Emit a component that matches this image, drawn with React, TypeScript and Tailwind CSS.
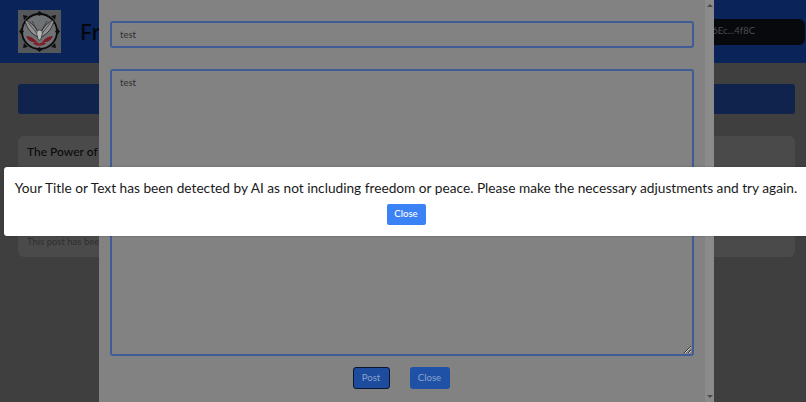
function Logo() {
  return (
    <svg viewBox="0 0 43 43" className="h-[43px] w-[43px] shrink-0">
      <rect width="43" height="43" fill="#55585a" />
      <circle cx="21.5" cy="21.5" r="17.5" fill="#6f7275" stroke="#0b0b0d" strokeWidth="1.8" />
      <g fill="#0e0e11">
        <path d="M21.5 1l3 2.5-3 2.5-3-2.5z" />
        <path d="M21.5 37l3 2.5-3 2.5-3-2.5z" />
        <path d="M1 21.5l2.5-3 2.5 3-2.5 3z" />
        <path d="M37 21.5l2.5-3 2.5 3-2.5 3z" />
        <path d="M5 5l5 1-4 4zM38 5l-5 1 4 4zM5 38l5-1-4-4zM38 38l-5-1 4-4z" />
      </g>
      <path d="M20 27C13 24 8 17 7 10c6 2 12 8 14 15z" fill="#8f9192" stroke="#1a1a1c" strokeWidth="0.8" />
      <path d="M23 27c7-3 12-10 13-17-6 2-12 8-14 15z" fill="#8f9192" stroke="#1a1a1c" strokeWidth="0.8" />
      <path d="M10.5 13l9 11M14 11l6 11M32.5 13l-9 11M29 11l-6 11" stroke="#2a2a2c" strokeWidth="0.7" fill="none" />
      <path d="M21.5 20c2.5 0 3.5 2.5 2.5 5l-1.5 5h-2L19 25c-1-2.5 0-5 2.5-5z" fill="#b5b6b6" stroke="#1a1a1c" strokeWidth="0.6" />
      <path d="M8 26c4 0 8 2 11 6-5 1-9-1-11-6zM35 26c-4 0-8 2-11 6 5 1 9-1 11-6z" fill="#7a1a24" />
      <path d="M15 33c2.5-1 5-1 6.5 1 1.5-2 4-2 6.5-1-2.5 3.5-10.5 3.5-13 0z" fill="#7f1c28" />
    </svg>
  )
}

function Scrollbar() {
  return (
    <div className="flex w-[9px] shrink-0 flex-col items-center justify-between bg-[#8b8b8b] py-[4px]">
      <span className="h-0 w-0 border-x-[3px] border-b-[3px] border-x-transparent border-b-[#4a4a4a]" />
      <span className="h-0 w-0 border-x-[3px] border-t-[3px] border-x-transparent border-t-[#4a4a4a]" />
    </div>
  )
}

export default function App() {
  return (
    <div className="relative h-[402px] w-[806px] overflow-hidden bg-[#3f3f3f] font-['Lato',sans-serif]">
      <header className="flex h-[63px] items-center justify-between bg-[#0a2358] pl-[18px] pr-px">
        <div className="flex items-center gap-[19px]">
          <Logo />
          <h1 className="font-['Noto_Sans',sans-serif] text-[22px] font-medium text-[#04070f]">Freedom</h1>
        </div>
        <div className="flex h-[26px] items-center rounded-md bg-[#08090c] pl-[20px] pr-[50px] text-[9.5px] text-[#4a4c50]">
          0x36Ec...4f8C
        </div>
      </header>

      <main className="flex flex-col gap-[22px] px-[18px] pr-[11px] pt-[21px]">
        <div className="h-[30px] rounded-[3px] bg-[#10234c]" />
        <article className="h-[121px] rounded-md bg-[#4a4a4a] px-[9px] pt-[6px]">
          <h2 className="text-[12px] font-medium leading-[20px] text-[#0b0b0b]">The Power of Freedom</h2>
          <p className="mt-[4px] flex justify-between text-[9.5px] leading-[18px] text-[#1c1c1c]">
            <span>Freedom and peace</span>
            <span>are worth the work</span>
          </p>
          <p className="mt-[50px] text-[9.5px] leading-[16px] text-[#2f2f2f]">This post has been</p>
        </article>
      </main>

      <div className="absolute inset-y-0 left-[99px] flex w-[615px] bg-[#828282]">
        <div className="flex min-w-0 flex-1 flex-col px-[11px] pb-[13px] pt-[21px]">
          <input
            readOnly
            value="test"
            className="h-[27px] w-full rounded-[3px] border-2 border-[#3f5c96] bg-transparent px-[8px] text-[9.5px] text-[#2f2f2f] outline-none"
          />
          <textarea
            readOnly
            value="test"
            className="mt-[21px] h-[288px] w-full rounded-[3px] border-2 border-[#3f5c96] bg-transparent px-[8px] py-[5px] text-[9.5px] text-[#2f2f2f] outline-none"
          />
          <div className="mt-[11px] flex justify-center gap-[20px] pr-[2px]">
            <button className="h-[22px] w-[37px] rounded-[3px] border border-[#0a1530] bg-[#1d4c9e] text-[9.6px] text-[#8ba2cd]">
              Post
            </button>
            <button className="h-[22px] w-[40px] rounded-[3px] bg-[#1f51a6] text-[9.6px] text-[#8ba2cd]">Close</button>
          </div>
        </div>
        <Scrollbar />
      </div>

      <div className="absolute left-[4px] top-[167px] flex h-[69px] w-[804px] flex-col items-center rounded-[3px] bg-white pt-[9px] shadow-[0_0_2px_rgba(0,0,0,0.3)]">
        <p className="whitespace-nowrap text-[13.7px] leading-[24px] text-[#1a1a1a]">
          Your Title or Text has been detected by AI as not including freedom or peace. Please make the necessary
          adjustments and try again.
        </p>
        <button className="mt-[4px] h-[21px] w-[39px] rounded-[2px] bg-[#3b82f6] text-[9.6px] font-medium text-white">
          Close
        </button>
      </div>
    </div>
  )
}
